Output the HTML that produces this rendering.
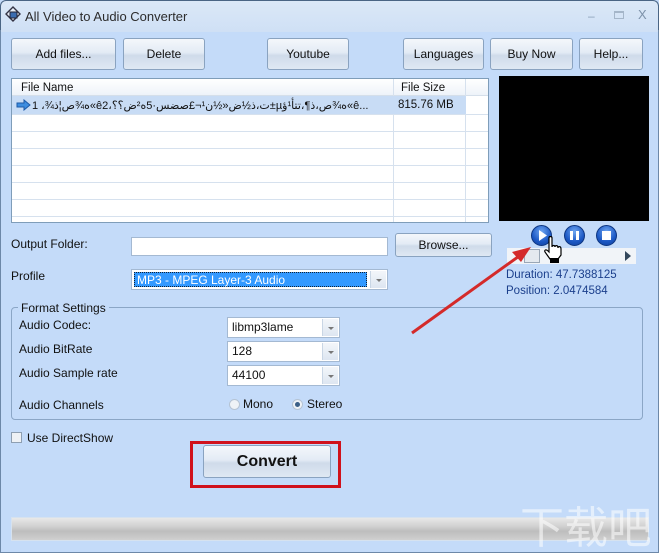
<!DOCTYPE html>
<html><head><meta charset="utf-8">
<style>
*{box-sizing:border-box;margin:0;padding:0}
html{width:659px;height:553px;overflow:hidden}
body{width:659px;height:553px;overflow:hidden;background:#c4dbf9;font-family:"Liberation Sans","DejaVu Sans",sans-serif;font-size:11.5px;color:#111;position:relative}
.a{position:absolute}
.title{left:0;top:0;width:659px;height:32px;background:linear-gradient(#dbe8f7,#cfe0f5);border:1px solid #4a6584;border-bottom:none;border-radius:6px 6px 0 0}
.frame{left:0;top:30px;width:659px;height:523px;border-left:1px solid #6d88a8;border-right:1px solid #6d88a8;border-bottom:1px solid #6d88a8}
.btn{position:absolute;border:1px solid #8aa3c0;border-radius:3px;background:linear-gradient(#f4f7fb 0%,#e3ebf5 45%,#cfdbea 55%,#dfe8f3 100%);text-align:center;color:#111;font-size:12px}
.list{left:11px;top:78px;width:478px;height:145px;background:#fff;border:1px solid #7f9db9;overflow:hidden}
.hl{position:absolute;left:0;width:100%;height:1px;background:#d6e1ee}
.combo{position:absolute;background:#fff;border:1px solid #a4b9d2;font-size:12px;padding-left:4px}
.dd{position:absolute;right:1px;top:1px;bottom:1px;width:16px;background:linear-gradient(#f3f6fa,#dde6f1);border-left:1px solid #c9d6e5}
.dd:after{content:"";position:absolute;left:5px;top:8px;border:3px solid transparent;border-top:3px solid #777}
.lbl{position:absolute;font-size:12px}
.pb{position:absolute;width:21px;height:21px;border-radius:50%;background:radial-gradient(circle at 50% 30%,#6fa6f0,#1c58c5 60%,#0f3f9a);border:1px solid #0d3580}
</style></head><body>
<div class="a title"></div>
<div class="a frame"></div>
<svg class="a" style="left:4px;top:6px" width="18" height="18" viewBox="0 0 18 18"><path d="M2 8 L9 1 L16 8 L9 15 Z" fill="#e8eef7" stroke="#334" stroke-width="1.4"/><rect x="6" y="6" width="7" height="6" fill="#3a6cb0" stroke="#223" stroke-width="1"/></svg>
<div class="a" style="left:25px;top:9px;font-size:13px;color:#2c2c2c">All Video to Audio Converter</div>
<div class="a" style="left:588px;top:9px;color:#8ba0b8;font-size:12px">–</div>
<div class="a" style="left:614px;top:11px;width:10px;height:8px;border:1px solid #a5b6c9;border-top:2px solid #a5b6c9"></div>
<div class="a" style="left:638px;top:7px;color:#7d92aa;font-size:13px">X</div>

<div class="btn" style="left:11px;top:38px;width:105px;height:32px;line-height:30px">Add files...</div>
<div class="btn" style="left:123px;top:38px;width:82px;height:32px;line-height:30px">Delete</div>
<div class="btn" style="left:267px;top:38px;width:82px;height:32px;line-height:30px">Youtube</div>
<div class="btn" style="left:403px;top:38px;width:81px;height:32px;line-height:30px">Languages</div>
<div class="btn" style="left:490px;top:38px;width:83px;height:32px;line-height:30px">Buy Now</div>
<div class="btn" style="left:579px;top:38px;width:64px;height:32px;line-height:30px">Help...</div>

<div class="a list">
 <div class="a" style="left:0;top:0;width:100%;height:17px;background:linear-gradient(#fff,#eef3f9);border-bottom:1px solid #d5dfea"></div>
 <div class="a" style="left:9px;top:3px;font-size:11.5px">File Name</div>
 <div class="a" style="left:389px;top:3px;font-size:11.5px">File Size</div>
 <div class="a" style="left:381px;top:0;width:1px;height:145px;background:#d6e1ee"></div>
 <div class="a" style="left:453px;top:0;width:1px;height:145px;background:#d6e1ee"></div>
 <div class="a" style="left:0;top:17px;width:454px;height:18px;background:#c8dcf5"></div>
 <div class="hl" style="top:35px"></div><div class="hl" style="top:52px"></div><div class="hl" style="top:69px"></div><div class="hl" style="top:86px"></div><div class="hl" style="top:103px"></div><div class="hl" style="top:120px"></div><div class="hl" style="top:137px"></div>
 <svg class="a" style="left:4px;top:20px" width="16" height="12"><path d="M1 4 H8 V1 L14 6 L8 11 V8 H1 Z" fill="#3d8de0" stroke="#1d5aa8"/></svg>
 <div class="a" style="left:20px;top:20px;font-size:11px;white-space:nowrap">1 ،¾ه¾ص¦ذ«ê2،ت،ذ½ض«½ن¹¬£صضس·5ه²ض؟؟±µه¾ص،ذ¶،تتأ¹ؤ«ê...</div>
 <div class="a" style="left:386px;top:20px;font-size:11.5px">815.76 MB</div>
</div>

<div class="a" style="left:499px;top:76px;width:150px;height:145px;background:#000"></div>
<div class="pb" style="left:531px;top:225px"></div>
<svg class="a" style="left:538px;top:230px" width="10" height="11"><path d="M1 0 L9 5.5 L1 11 Z" fill="#fff"/></svg>
<div class="pb" style="left:564px;top:225px"></div>
<div class="a" style="left:570px;top:231px;width:3px;height:9px;background:#fff"></div><div class="a" style="left:576px;top:231px;width:3px;height:9px;background:#fff"></div>
<div class="pb" style="left:596px;top:225px"></div>
<div class="a" style="left:602px;top:231px;width:9px;height:9px;background:#fff"></div>
<div class="a" style="left:507px;top:248px;width:129px;height:16px;background:#f1f4f8"></div>
<div class="a" style="left:524px;top:249px;width:16px;height:14px;background:#e4e9ef;border:1px solid #9aa7b6"></div>
<svg class="a" style="left:624px;top:251px" width="8" height="10"><path d="M1 0 L7 5 L1 10Z" fill="#33475c"/></svg>
<svg class="a" style="left:543px;top:236px" width="20" height="28"><path d="M6 2 C6 0 9 0 9 2 V11 C9 9 12 9 12 11 C12 9 15 9 15 12 C15 10 18 10 18 13 V19 L15 23 H7 L2 16 C1 14 3 13 5 15 L6 16 Z" fill="#fff" stroke="#000" stroke-width="1.2"/><rect x="7" y="22" width="9" height="5" fill="#000"/></svg>
<div class="a" style="left:506px;top:269px;color:#1b3f8c;font-size:11.5px">Duration: 47.7388125</div>
<div class="a" style="left:506px;top:285px;color:#1b3f8c;font-size:11.5px">Position: 2.0474584</div>

<div class="lbl" style="left:11px;top:237px">Output Folder:</div>
<div class="a" style="left:131px;top:237px;width:257px;height:19px;background:#fff;border:1px solid #a4b9d2"></div>
<div class="btn" style="left:395px;top:233px;width:97px;height:24px;line-height:22px">Browse...</div>
<div class="lbl" style="left:11px;top:269px">Profile</div>
<div class="combo" style="left:131px;top:269px;width:257px;height:21px"><div class="a" style="left:2px;top:2px;width:233px;height:15px;background:#3399ff;color:#fff;padding-left:2px;line-height:15px;border:1px dotted #123">MP3 - MPEG Layer-3 Audio</div><div class="dd"></div></div>

<div class="a" style="left:11px;top:307px;width:632px;height:113px;border:1px solid #8ba6c6;border-radius:4px"></div>
<div class="a" style="left:18px;top:301px;background:#c4dbf9;padding:0 3px;font-size:12px">Format Settings</div>
<div class="lbl" style="left:19px;top:318px">Audio Codec:</div>
<div class="lbl" style="left:19px;top:342px">Audio BitRate</div>
<div class="lbl" style="left:19px;top:366px">Audio Sample rate</div>
<div class="lbl" style="left:19px;top:398px">Audio Channels</div>
<div class="combo" style="left:227px;top:317px;width:113px;height:21px;line-height:19px">libmp3lame<div class="dd"></div></div>
<div class="combo" style="left:227px;top:341px;width:113px;height:21px;line-height:19px">128<div class="dd"></div></div>
<div class="combo" style="left:227px;top:365px;width:113px;height:21px;line-height:19px">44100<div class="dd"></div></div>
<div class="a" style="left:229px;top:399px;width:11px;height:11px;border-radius:50%;border:1px solid #b5c3d3;background:#eef2f6"></div>
<div class="lbl" style="left:243px;top:397px">Mono</div>
<div class="a" style="left:292px;top:399px;width:11px;height:11px;border-radius:50%;border:1px solid #b5c3d3;background:#eef2f6"></div>
<div class="a" style="left:295px;top:402px;width:5px;height:5px;border-radius:50%;background:#3b5f86"></div>
<div class="lbl" style="left:307px;top:397px">Stereo</div>

<div class="a" style="left:11px;top:432px;width:11px;height:11px;border:1px solid #8e9fb2;background:#eef1f5"></div>
<div class="lbl" style="left:27px;top:431px">Use DirectShow</div>
<div class="a" style="left:190px;top:441px;width:151px;height:47px;border:3px solid #d0111c"></div>
<div class="btn" style="left:203px;top:445px;width:128px;height:33px;line-height:31px;font-size:16px;font-weight:bold">Convert</div>

<svg class="a" style="left:0;top:0" width="659" height="553"><line x1="412" y1="333" x2="522" y2="254" stroke="#d42a2a" stroke-width="3"/><path d="M531 247 L512 252 L521 262 Z" fill="#d42a2a"/></svg>

<div class="a" style="left:11px;top:517px;width:638px;height:24px;border:1px solid #d6e2ef;background:linear-gradient(#e8e8e8,#cfcfcf 40%,#bdbdbd 60%,#d0d0d0)"></div>
<div class="a" style="left:520px;top:500px;width:130px;height:50px;overflow:hidden;white-space:nowrap;font-size:44px;color:rgba(255,255,255,0.55);font-family:'Noto Sans CJK SC',sans-serif;line-height:48px">下载吧</div>
</body></html>
